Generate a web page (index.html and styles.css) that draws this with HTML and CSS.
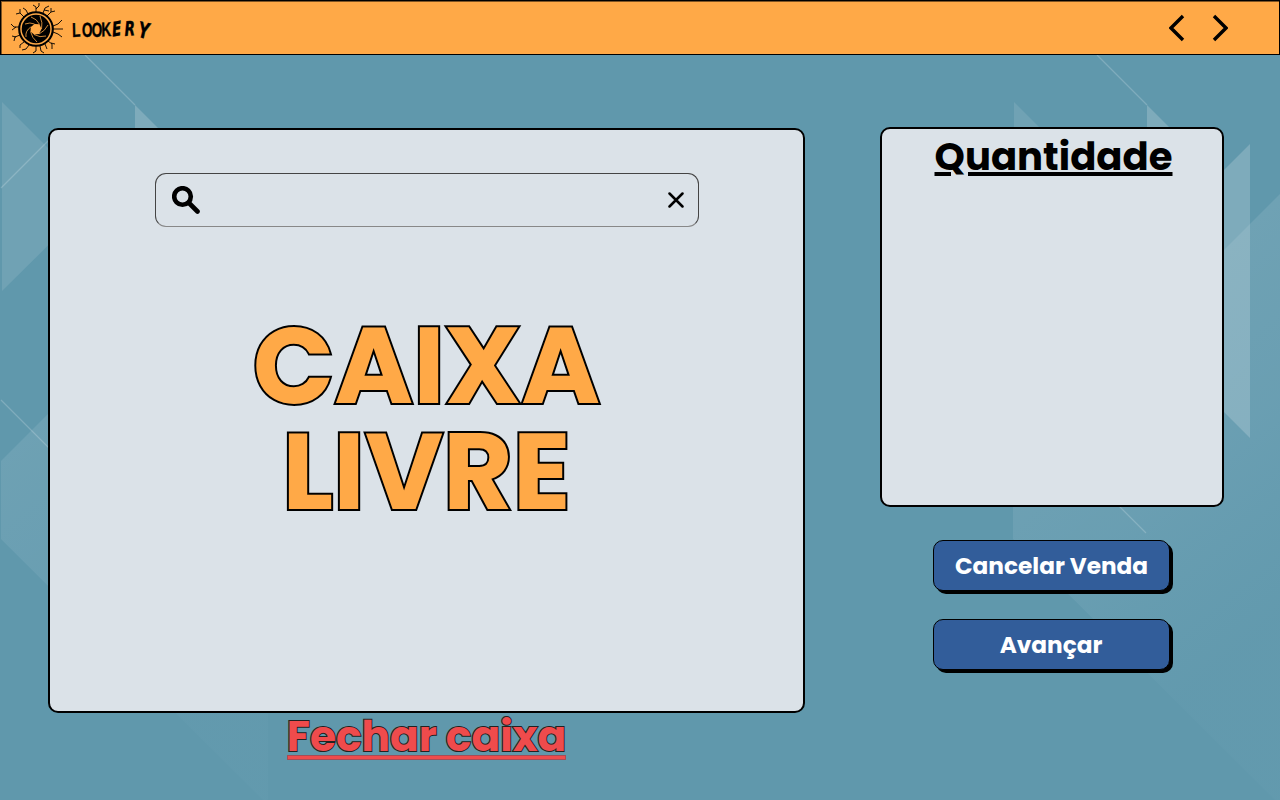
FILE: index.html
```html
<!DOCTYPE html>
<html lang="pt-BR">
<head>
<meta charset="utf-8">
<title>Lookery - Caixa</title>
<link rel="stylesheet" href="styles.css">
</head>
<body>
<svg class="backdrop" viewBox="0 0 1280 800" aria-hidden="true">
  <defs>
    <linearGradient id="fade" gradientUnits="userSpaceOnUse" x1="20" y1="370" x2="240" y2="640">
      <stop offset="0" stop-color="#fff" stop-opacity=".1"/>
      <stop offset=".5" stop-color="#e6f0ff" stop-opacity=".075"/>
      <stop offset="1" stop-color="#bde" stop-opacity=".025"/>
    </linearGradient>
    <g id="tile">
      <path d="M2 102 97 197 2 291Z" fill="#fff" fill-opacity=".1"/>
      <path d="M135 105 186 156V386L135 335Z" fill="#fff" fill-opacity=".19"/>
      <path d="M238 144V438L186 386V196Z" fill="#fff" fill-opacity=".19"/>
      <path d="M1 461 268 194V805L1 539Z" fill="url(#fade)"/>
      <path d="M85 55 135 105M1 188 60 129M1 400 134 533" fill="none" stroke="#fff" stroke-opacity=".2" stroke-width="1.3"/>
    </g>
  </defs>
  <use href="#tile"/>
  <use href="#tile" x="1012"/>
</svg>
<div class="page">
  <header class="topbar">
    <div class="brand">
      <svg class="brand-mark" viewBox="0 0 56 52" aria-hidden="true">
        <g fill="none" stroke="#000">
          <circle cx="27" cy="27" r="16.800" stroke-width="2.100"/>
          <path stroke-width=".9" d="M27 10V5l-3-2M27 7l3-3V1M34 11l2-5 4-2M35 8l5 1M38 14l4-4V6M42 10l4-1M15 15l-4-4V7M11 11l-4 1M19 12l-2-4-3-2M10 25H5L2 22M7 25l-4 3M11 33l-5 2-1 4M7 35l-4-1M44 24l5-2 4-4M44 27h10M44 30l5 2 4 3M39 39l4 3v5M42 41l4 1M36 42l2 5M27 44v5l-3 2M31 44l1 5 3 2M20 43l-3 4-4 1M15 40l-4 3v3"/>
        </g>
        <circle cx="27" cy="27" r="14.300" fill="#000"/>
        <path d="M25.500 22 30.500 22.300 32.500 27 30 32 25 32.500 21.500 29.500 21.800 25Z" fill="#ffa947"/>
        <path fill="none" stroke="#ffa947" stroke-width=".8" d="M25.500 22Q21 20 16 22M30.500 22.300Q28 17 22 15M32.500 27Q34 21 31 14M30 32Q36 29 39 23M25 32.500Q31 36 37 34M21.500 29.500Q23 36 28 40M21.800 25Q16 29 17 35"/>
      </svg>
      <svg class="wordmark" viewBox="0 0 86 26" role="img" aria-label="Lookery"><text x="2 16 30 45 61 79 98" y="21 20.500 20.500 20.500 20.500 20 21" rotate="-2 2 2 -2 -6 -3 8" transform="scale(.68 1)">LOOK<tspan class="wordmark-wide">ER</tspan><tspan class="wordmark-tail">Y</tspan></text></svg>
    </div>
    <nav class="history">
      <svg viewBox="0 0 16 28"><path d="M14 2 2 14 14 26"/></svg>
      <svg viewBox="0 0 16 28"><path d="M2 2 14 14 2 26"/></svg>
    </nav>
  </header>
  <main class="content">
    <section class="register">
      <div class="card sale">
        <div class="search">
          <svg class="search-icon" viewBox="0 0 28 28"><circle cx="10.500" cy="10.500" r="8.300"/><path d="M17 17l8.500 8.500"/></svg>
          <svg class="clear-icon" viewBox="0 0 16 16"><path d="M1.500 1.500 14.500 14.500M14.500 1.500 1.500 14.500"/></svg>
        </div>
        <h1 class="status"><span>CAIXA</span><span>LIVRE</span></h1>
      </div>
      <a class="close-register">Fechar caixa</a>
    </section>
    <aside class="side">
      <div class="card quantity"><h2>Quantidade</h2></div>
      <button class="action cancel"><span>Cancelar Venda</span></button>
      <button class="action next"><span>Avançar</span></button>
    </aside>
  </main>
</div>
</body>
</html>
```
FILE: styles.css
```css
* { box-sizing: border-box; }
body {
  margin: 0;
  width: 1280px;
  height: 800px;
  overflow: hidden;
  background: #6098ac;
  font-family: Poppins, Inter, "Open Sans", sans-serif;
  color: #000;
}
.backdrop { position: absolute; inset: 0; width: 1280px; height: 800px; }
.page { position: relative; height: 800px; display: flex; flex-direction: column; }
.topbar {
  height: 55px;
  display: flex;
  justify-content: space-between;
  align-items: center;
  padding: 0 51px 0 8px;
  background: #ffa947;
  border: 1px solid #000;
  box-shadow: inset 1px 1px 0 rgba(0, 0, 0, .5);
}
.brand { display: flex; align-items: center; gap: 6px; }
.brand-mark { width: 56px; height: 52px; }
.wordmark { width: 86px; height: 26px; margin-top: 3px; overflow: visible; }
.wordmark text {
  font: bold 20px "Liberation Sans", sans-serif;
  stroke: #000;
  stroke-width: .4px;
}
.wordmark-wide { font: italic bold 20px "DejaVu Sans", sans-serif; }
.wordmark-tail { font: italic bold 22px "DejaVu Sans", sans-serif; }
.history { display: flex; gap: 27px; }
.history svg { width: 16px; height: 28px; }
.history path { fill: none; stroke: #000; stroke-width: 3.4; }
.content {
  display: flex;
  align-items: flex-start;
  gap: 75px;
  padding: 72px 56px 0 48px;
}
.register { width: 757px; padding-top: 1px; display: flex; flex-direction: column; align-items: center; }
.card { background: #dbe2e8; border: 2px solid #000; border-radius: 10px; }
.sale {
  width: 757px;
  height: 585px;
  padding-top: 43px;
  display: flex;
  flex-direction: column;
  align-items: center;
}
.search {
  width: 544px;
  height: 54px;
  padding: 0 14px 0 16px;
  display: flex;
  justify-content: space-between;
  align-items: center;
  border: 1px solid #444;
  border-bottom-color: #888;
  border-radius: 11px;
}
.search svg { fill: none; stroke: #000; stroke-linecap: round; }
.search-icon { width: 28px; height: 28px; stroke-width: 4.6; }
.clear-icon { width: 16px; height: 16px; stroke-width: 2.5; }
.status {
  margin: 86px 0 0;
  display: flex;
  flex-direction: column;
  align-items: center;
  font-size: 107px;
  font-weight: 700;
  line-height: 106px;
  color: #ffa947;
  -webkit-text-stroke: 4px #000;
  paint-order: stroke fill;
}
.close-register {
  margin-top: -1px;
  font-size: 42.3px;
  font-weight: 700;
  line-height: 50px;
  color: #ef4b4c;
  -webkit-text-stroke: 2px #222;
  paint-order: stroke fill;
}
.close-register::after {
  content: "";
  display: block;
  height: 3px;
  margin-top: -7px;
  background: #ef4b4c;
  border: 1px solid #a54c56;
}
.side { width: 344px; display: flex; flex-direction: column; align-items: center; }
.quantity { width: 344px; height: 380px; text-align: center; }
.quantity h2 {
  margin: 3px 0 0 3px;
  font-size: 38.6px;
  line-height: 50px;
  font-weight: 700;
  text-decoration: underline;
  text-decoration-thickness: 4px;
  text-underline-offset: 2px;
}
.action {
  width: 237px;
  height: 51px;
  padding: 1px 0 0;
  border: 1px solid #000;
  border-radius: 10px;
  background: #325d9a;
  box-shadow: 3px 3px 0 #000;
  font: 700 23.2px/49px Poppins, Inter, sans-serif;
  color: #fff;
}
.cancel { margin: 33px 1px 0 0; }
.next { margin: 28px 2px 0 0; }
```
